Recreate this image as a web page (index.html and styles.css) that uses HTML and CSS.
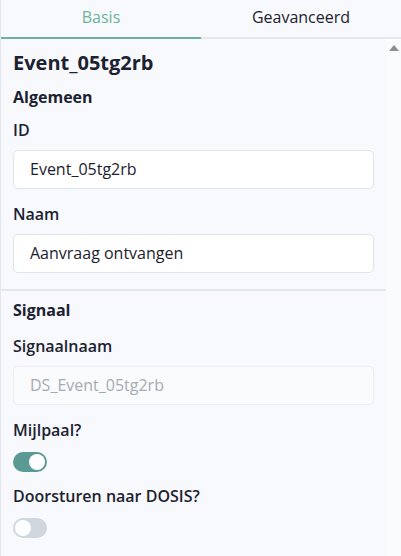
FILE: index.html
```html
<!DOCTYPE html>
<html lang="nl">
<head>
    <meta charset="UTF-8">
    <meta name="viewport" content="width=device-width, initial-scale=1.0">
    <title>Eigenschappen</title>
    <link rel="stylesheet" href="styles.css">
</head>
<body>
    <div class="panel">
        <div class="tabs">
            <div class="tab active">Basis</div>
            <div class="tab">Geavanceerd</div>
        </div>
        <div class="panel-body">
            <div class="content">
                <div class="section">
                    <h1 class="element-title">Event_05tg2rb</h1>
                    <h2 class="group-title">Algemeen</h2>
                    <label class="field-label">ID</label>
                    <div class="input">Event_05tg2rb</div>
                    <label class="field-label">Naam</label>
                    <div class="input">Aanvraag ontvangen</div>
                </div>
                <div class="section">
                    <h2 class="group-title">Signaal</h2>
                    <label class="field-label">Signaalnaam</label>
                    <div class="input disabled">DS_Event_05tg2rb</div>
                    <label class="field-label">Mijlpaal?</label>
                    <div class="toggle on"><span class="knob"></span></div>
                    <label class="field-label">Doorsturen naar DOSIS?</label>
                    <div class="toggle"><span class="knob"></span></div>
                </div>
            </div>
            <div class="scrollbar">
                <span class="scroll-up"></span>
            </div>
        </div>
    </div>
</body>
</html>
```

FILE: styles.css
```css
* {
    box-sizing: border-box;
}

body {
    margin: 0;
    background-color: #f8f9fd;
    font-family: 'Open Sans', 'Noto Sans', sans-serif;
    color: #1c2230;
}

.panel {
    height: 556px;
    border-left: 1px solid #e2e6ee;
    display: flex;
    flex-direction: column;
    overflow: hidden;
}

.tabs {
    display: flex;
    height: 39px;
    flex-shrink: 0;
}

.tab {
    flex: 1;
    text-align: center;
    font-size: 16px;
    line-height: 34px;
    border-bottom: 2px solid #e2e8ee;
    color: #1c2230;
}

.tab.active {
    color: #6db39a;
    border-bottom-color: #6db39a;
}

.panel-body {
    display: flex;
    flex: 1;
    min-height: 0;
}

.content {
    flex: 1;
}

.scrollbar {
    width: 15px;
    background-color: #fafbfd;
    display: flex;
    justify-content: center;
    padding-top: 6px;
}

/* little up arrow of the scrollbar */
.scroll-up {
    width: 0;
    height: 0;
    border-left: 5px solid transparent;
    border-right: 5px solid transparent;
    border-bottom: 6px solid #8a8d92;
}

.section {
    padding: 0 12px;
    display: flex;
    flex-direction: column;
}

.section + .section {
    border-top: 2px solid #e2e6ee;
    margin-top: 16px;
}

.element-title {
    font-size: 20px;
    font-weight: 700;
    margin: 10px 0 0 0;
    line-height: 28px;
}

.group-title {
    font-size: 16px;
    font-weight: 700;
    margin: 9px 0 0 0;
    line-height: 22px;
}

.section + .section .group-title {
    margin-top: 8px;
}

.field-label {
    font-size: 16px;
    font-weight: 600;
    margin-top: 14px;
    line-height: 22px;
}

.group-title + .field-label {
    margin-top: 11px;
}

.section + .section .group-title + .field-label {
    margin-top: 14px;
}

.input {
    margin-top: 9px;
    height: 39px;
    border: 1px solid #e0e4eb;
    border-radius: 5px;
    background-color: #fff;
    padding: 0 16px;
    font-size: 16px;
    line-height: 37px;
}

.input.disabled {
    background-color: #fafbfd;
    border-color: #eceef3;
    color: #a6aab2;
}

.input + .field-label {
    margin-top: 14px;
}

.toggle {
    margin-top: 11px;
    width: 34px;
    height: 20px;
    border-radius: 10px;
    background-color: #cfd6df;
    position: relative;
}

.toggle.on {
    background-color: #5b9a94;
}

.toggle + .field-label {
    margin-top: 13px;
}

.knob {
    position: absolute;
    top: 2px;
    left: 2px;
    width: 16px;
    height: 16px;
    border-radius: 50%;
    background-color: #fff;
}

.toggle.on .knob {
    left: 16px;
}
```
